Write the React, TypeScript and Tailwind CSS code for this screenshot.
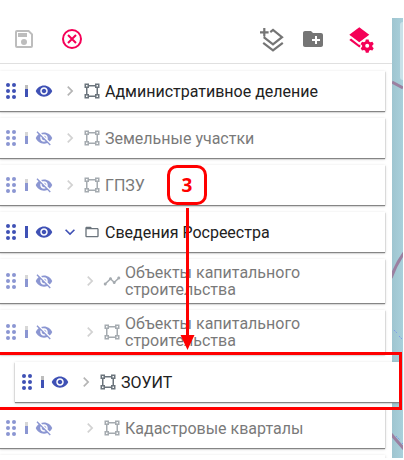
import React from 'react';
import { MdVisibility, MdVisibilityOff, MdChevronRight, MdExpandMore, MdTimeline, MdFolderOpen, MdCreateNewFolder } from 'react-icons/md';

type Kind = 'square' | 'folder' | 'line';
type Item = { title: string; hidden?: boolean; child?: boolean; open?: boolean; kind?: Kind; card: string; label?: string };

const items: Item[] = [
  { title: 'Административное деление', card: 'h-10 w-[385px] mb-[7px]' },
  { title: 'Земельные участки', hidden: true, card: 'h-10 w-[385px] mb-[7px]' },
  { title: 'ГПЗУ', hidden: true, card: 'h-10 w-[385px] mb-[7px]' },
  { title: 'Сведения Росреестра', open: true, kind: 'folder', card: 'h-10 w-[385px] mb-[7px]' },
  { title: 'Объекты капитального строительства', hidden: true, child: true, kind: 'line', card: 'h-11 w-[385px] mb-[7px]', label: 'pb-px' },
  { title: 'Объекты капитального строительства', hidden: true, child: true, card: 'h-11 w-[385px] mb-[8px]', label: 'pb-px' },
  { title: 'ЗОУИТ', card: 'h-10 w-[384px] ml-[15px] mb-[6px] pl-px relative z-10' },
  { title: 'Кадастровые кварталы', hidden: true, child: true, card: 'h-10 w-[385px] mb-[7px]' },
];

function VectorSquare() {
  return (
    <svg width="18" height="18" viewBox="0 0 24 24" fill="currentColor">
      <path d="M2 2h6v2h8V2h6v6h-2v8h2v6h-6v-2H8v2H2v-6h2V8H2V2m14 6V6H8v2H6v8h2v2h8v-2h2V8h-2M4 4v2h2V4H4m14 0v2h2V4h-2M4 18v2h2v-2H4m14 0v2h2v-2h-2Z" />
    </svg>
  );
}

function DragDots() {
  return (
    <svg width="12" height="18" viewBox="0 0 12 18" fill="#3f51b5">
      {[3, 9, 15].map((y) => (
        <g key={y}>
          <circle cx="3" cy={y} r="2" />
          <circle cx="9" cy={y} r="2" />
        </g>
      ))}
    </svg>
  );
}

function Row({ item }: { item: Item }) {
  return (
    <div className={`${item.card} shrink-0 bg-white shadow-[0_1px_1px_#858585,0_1px_3px_#00000033]`}>
      <div className={`flex h-full items-center pl-[5px] ${item.hidden ? 'opacity-60' : ''}`}>
        <DragDots />
        <div className={`ml-2 mr-[10px] h-3 w-[3px] ${item.open ? 'bg-[#3f51b5]' : 'bg-linear-to-b from-[#bdbdbd] from-33% to-[#3f51b5] to-33%'}`} />
        <div className="-ml-[3px] text-[#3f51b5]">
          {item.hidden ? <MdVisibilityOff size={18} /> : <MdVisibility size={18} />}
        </div>
        <div className={`${item.child ? 'ml-[27px]' : 'ml-[7px]'} ${item.open ? 'text-[#3f51b5]' : 'text-[#b5b5b5]'}`}>
          {item.open ? <MdExpandMore size={20} /> : <MdChevronRight size={20} />}
        </div>
        <div className="ml-[3px] mr-1 text-[#6b747c]">
          {item.kind === 'folder' ? <MdFolderOpen size={16} className="mx-px" /> : item.kind === 'line' ? <MdTimeline size={18} /> : <VectorSquare />}
        </div>
        <div className={`w-[225px] ${item.child ? 'max-w-[200px]' : ''} ${item.label ?? 'pt-px'} text-[16px] leading-[17px] text-[#212121]`}>{item.title}</div>
      </div>
    </div>
  );
}

export default function App() {
  return (
    <div className="relative h-[460px] w-[404px] overflow-hidden bg-white font-[Roboto,sans-serif]">
      <div className="flex h-[458px] w-[403px] overflow-hidden">
        <div className="flex w-[392px] shrink-0 flex-col bg-white">
          <header className="flex h-16 shrink-0 items-end border-b border-[#e0e0e0] pb-3 pl-3">
            <svg width="24" height="24" viewBox="0 0 24 24" fill="#bdbdbd">
              <path fillRule="evenodd" d="M5 3h12l4 4v12a2 2 0 0 1-2 2H5a2 2 0 0 1-2-2V5a2 2 0 0 1 2-2Zm0 2v14h14V7.8L16.2 5H5Z" />
              <path d="M6 6h9v4H6zM12 12a3 3 0 1 0 0 6 3 3 0 0 0 0-6Z" />
            </svg>
            <svg className="ml-6" width="24" height="24" viewBox="0 0 24 24" fill="none" stroke="#f50057" strokeWidth="2">
              <circle cx="12" cy="12" r="9" />
              <path d="m8 8 8 8m0-8-8 8" />
            </svg>
            <svg className="ml-[176px] overflow-visible" width="24" height="24" viewBox="0 0 24 24" fill="none" stroke="#757575" strokeWidth="2.2">
              <path d="M0 5.3h8.6M4.3 1v8.6M10.3 5.1 13 3l9 7.2-9 7.2-9.3-7.2M3.2 15.9l9.8 7.5 9.8-7.5" />
            </svg>
            <MdCreateNewFolder size={24} className="ml-[17px] text-[#757575]" />
            <svg className="ml-6 overflow-visible" width="24" height="24" viewBox="0 0 24 24" fill="#f50057">
              <path d="m10.3 0.3 10 7.5-10 7.5-10-7.5Z" />
              <path d="m.3 13 1.8-1.4 8.2 6.3 1-.7v2.5l-1 .8Z" />
              <path fillRule="evenodd" d="M16.8 12.6h2.8l.5 2 1.3.7 2-.6 1.3 2.3-1.4 1.4v1.4l1.4 1.5-1.3 2.2-2-.5-1.3.7-.5 2h-2.8l-.5-2-1.3-.7-2 .5-1.3-2.2 1.4-1.5v-1.4l-1.4-1.4 1.3-2.3 2 .6 1.3-.7Zm1.4 4.2a2 2 0 1 0 0 4 2 2 0 0 0 0-4Z" />
            </svg>
          </header>
          <main className="flex flex-col pt-[7px]">
            {items.map((item, i) => <Row key={i} item={item} />)}
            <div className="h-10 w-[385px] shrink-0 bg-white shadow-[0_1px_3px_#00000033]" />
          </main>
        </div>
        <div className="mt-[18px] w-[11px] bg-linear-to-r from-[#9fc5d0] to-[#a9d0db]">
          <svg width="11" height="440" viewBox="0 0 11 440" fill="none">
            <rect x="8" y="4" width="12" height="58" rx="3" fill="#c9e1e8" />
            <path d="M0 64 11 70M-1 260Q4 246 12 235M-1 416 12 431" stroke="#9b80a1" strokeWidth="3" />
            <path d="m2 312 3 3m2 3 3 3M4 418l4 4m2 3 2 2" stroke="#7d9bea" strokeDasharray="2 1" />
          </svg>
        </div>
      </div>
      <div className="absolute -left-2 top-[352px] z-20 h-[58px] w-[410px] border-[3px] border-[#ff0000]" />
      <svg className="absolute left-[179px] top-[208px] z-20" width="16" height="144" viewBox="0 0 16 144" fill="#ff0000">
        <path d="M7 0h3v127h5.5L8.5 142l-7-15H7Z" />
      </svg>
      <div className="absolute left-[167px] top-[165px] z-20 flex h-10 w-10 items-center justify-center rounded-[10px] border-[3px] border-[#ff0000] bg-white font-['Open_Sans',sans-serif] text-[19px] font-bold text-[#ff0000]">3</div>
    </div>
  );
}
